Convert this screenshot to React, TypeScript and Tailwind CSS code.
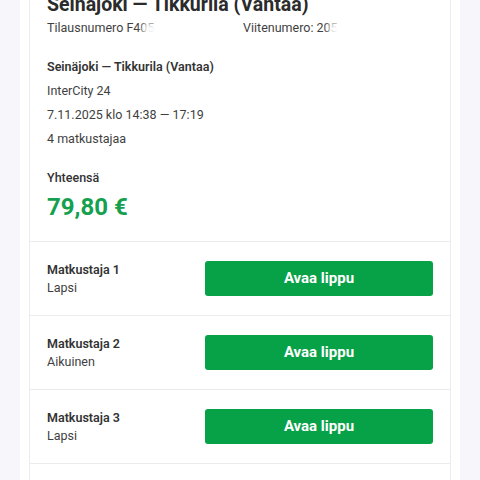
import React from "react";

const passengers = [
  { n: 1, type: "Lapsi" },
  { n: 2, type: "Aikuinen" },
  { n: 3, type: "Lapsi" },
  { n: 4, type: "Aikuinen" },
];

export default function App() {
  return (
    <div
      className="min-h-screen bg-[#f6f6fb] px-[20px] overflow-hidden"
      style={{ fontFamily: "Roboto, 'Liberation Sans', sans-serif" }}
    >
      <div className="bg-white px-[9px] -mt-[8px]">
        <div className="border-x border-b border-[#ececef] bg-white">
          {/* Header */}
          <div className="px-[17px]">
            <h1 className="text-[19.5px] font-bold text-[#2b2b2b] leading-[26px]">
              Seinäjoki — Tikkurila (Vantaa)
            </h1>
            <div className="grid grid-cols-[196px_1fr] text-[12.5px] text-[#3f3f3f] leading-[20px]">
              <div className="relative">
                <span>Tilausnumero F405</span>
                <span className="absolute left-[96px] top-[5px] w-[100px] h-[13px] bg-white blur-[3px]" />
              </div>
              <div className="relative">
                <span>Viitenumero: 205</span>
                <span className="absolute left-[86px] top-[4px] w-[110px] h-[14px] bg-white blur-[3px]" />
              </div>
            </div>
          </div>

          {/* Trip details */}
          <div className="px-[17px] pt-[17px] pb-[17px] text-[12.5px] leading-[24px] text-[#3f3f3f]">
            <p className="font-semibold text-[#333]">Seinäjoki — Tikkurila (Vantaa)</p>
            <p>InterCity 24</p>
            <p>7.11.2025 klo 14:38 — 17:19</p>
            <p>4 matkustajaa</p>

            <p className="mt-[15px] font-medium text-[#333]">Yhteensä</p>
            <p className="text-[24px] font-bold text-[#14a04e] leading-[34px]">79,80 €</p>
          </div>

          {/* Passengers */}
          {passengers.map((p) => (
            <div
              key={p.n}
              className="flex items-center justify-between border-t border-[#ececef] px-[17px] h-[74px]"
            >
              <div className="text-[12.5px] leading-[18px]">
                <p className="font-semibold text-[#333]">Matkustaja {p.n}</p>
                <p className="text-[#3f3f3f]">{p.type}</p>
              </div>
              <button className="w-[228px] h-[35px] rounded-[3px] bg-[#07a147] text-white text-[15px] font-bold">
                Avaa lippu
              </button>
            </div>
          ))}
        </div>
      </div>
    </div>
  );
}
